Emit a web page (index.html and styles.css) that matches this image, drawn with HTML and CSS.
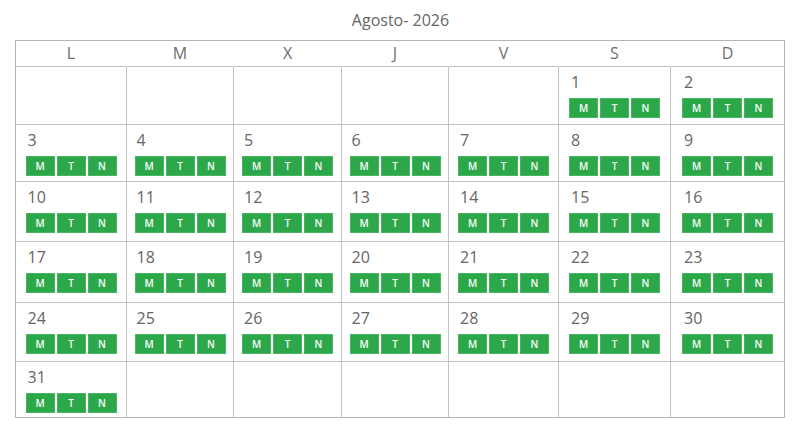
FILE: index.html
```html
<!DOCTYPE html>
<html lang="es">
<head>
<meta charset="utf-8">
<title>Agosto- 2026</title>
<link rel="stylesheet" href="styles.css">
</head>
<body>
<div class="page">
  <div class="title">Agosto- 2026</div>
  <div class="calendar">
    <div class="head">L</div>
    <div class="head">M</div>
    <div class="head">X</div>
    <div class="head">J</div>
    <div class="head">V</div>
    <div class="head">S</div>
    <div class="head">D</div>

    <div class="day"></div>
    <div class="day"></div>
    <div class="day"></div>
    <div class="day"></div>
    <div class="day"></div>
    <div class="day"><div class="num">1</div><div class="shifts"><span>M</span><span>T</span><span>N</span></div></div>
    <div class="day"><div class="num">2</div><div class="shifts"><span>M</span><span>T</span><span>N</span></div></div>

    <div class="day"><div class="num">3</div><div class="shifts"><span>M</span><span>T</span><span>N</span></div></div>
    <div class="day"><div class="num">4</div><div class="shifts"><span>M</span><span>T</span><span>N</span></div></div>
    <div class="day"><div class="num">5</div><div class="shifts"><span>M</span><span>T</span><span>N</span></div></div>
    <div class="day"><div class="num">6</div><div class="shifts"><span>M</span><span>T</span><span>N</span></div></div>
    <div class="day"><div class="num">7</div><div class="shifts"><span>M</span><span>T</span><span>N</span></div></div>
    <div class="day"><div class="num">8</div><div class="shifts"><span>M</span><span>T</span><span>N</span></div></div>
    <div class="day"><div class="num">9</div><div class="shifts"><span>M</span><span>T</span><span>N</span></div></div>

    <div class="day"><div class="num">10</div><div class="shifts"><span>M</span><span>T</span><span>N</span></div></div>
    <div class="day"><div class="num">11</div><div class="shifts"><span>M</span><span>T</span><span>N</span></div></div>
    <div class="day"><div class="num">12</div><div class="shifts"><span>M</span><span>T</span><span>N</span></div></div>
    <div class="day"><div class="num">13</div><div class="shifts"><span>M</span><span>T</span><span>N</span></div></div>
    <div class="day"><div class="num">14</div><div class="shifts"><span>M</span><span>T</span><span>N</span></div></div>
    <div class="day"><div class="num">15</div><div class="shifts"><span>M</span><span>T</span><span>N</span></div></div>
    <div class="day"><div class="num">16</div><div class="shifts"><span>M</span><span>T</span><span>N</span></div></div>

    <div class="day"><div class="num">17</div><div class="shifts"><span>M</span><span>T</span><span>N</span></div></div>
    <div class="day"><div class="num">18</div><div class="shifts"><span>M</span><span>T</span><span>N</span></div></div>
    <div class="day"><div class="num">19</div><div class="shifts"><span>M</span><span>T</span><span>N</span></div></div>
    <div class="day"><div class="num">20</div><div class="shifts"><span>M</span><span>T</span><span>N</span></div></div>
    <div class="day"><div class="num">21</div><div class="shifts"><span>M</span><span>T</span><span>N</span></div></div>
    <div class="day"><div class="num">22</div><div class="shifts"><span>M</span><span>T</span><span>N</span></div></div>
    <div class="day"><div class="num">23</div><div class="shifts"><span>M</span><span>T</span><span>N</span></div></div>

    <div class="day"><div class="num">24</div><div class="shifts"><span>M</span><span>T</span><span>N</span></div></div>
    <div class="day"><div class="num">25</div><div class="shifts"><span>M</span><span>T</span><span>N</span></div></div>
    <div class="day"><div class="num">26</div><div class="shifts"><span>M</span><span>T</span><span>N</span></div></div>
    <div class="day"><div class="num">27</div><div class="shifts"><span>M</span><span>T</span><span>N</span></div></div>
    <div class="day"><div class="num">28</div><div class="shifts"><span>M</span><span>T</span><span>N</span></div></div>
    <div class="day"><div class="num">29</div><div class="shifts"><span>M</span><span>T</span><span>N</span></div></div>
    <div class="day"><div class="num">30</div><div class="shifts"><span>M</span><span>T</span><span>N</span></div></div>

    <div class="day"><div class="num">31</div><div class="shifts"><span>M</span><span>T</span><span>N</span></div></div>
    <div class="day"></div>
    <div class="day"></div>
    <div class="day"></div>
    <div class="day"></div>
    <div class="day"></div>
    <div class="day"></div>
  </div>
</div>
</body>
</html>
```

FILE: styles.css
```css
* { box-sizing: border-box; }

html, body {
  margin: 0;
  padding: 0;
  background: #ffffff;
}

body {
  font-family: "Open Sans", "Noto Sans", sans-serif;
  color: #666666;
}

.page {
  padding: 10px 15px 0 15px;
  display: flex;
  flex-direction: column;
}

.title {
  font-size: 16px;
  line-height: 20px;
  text-align: center;
  color: #666666;
  margin-bottom: 10px;
  padding-left: 1px;
}

.calendar {
  width: 770px;
  display: grid;
  grid-template-columns: 111px 107px 108px 107px 110px 112px 114px;
  grid-template-rows: 26px 58px 57px 60px 61px 59px 56px;
  border-left: 1px solid #b5b5b5;
  border-top: 1px solid #b5b5b5;
}

.head {
  border-bottom: 1px solid #c2c2c2;
  border-right: 1px solid transparent;
  font-size: 16px;
  line-height: 24px;
  text-align: center;
  color: #6e6e6e;
}

.head:nth-child(7) {
  border-right-color: #b5b5b5;
}

.day {
  border-right: 1px solid #c2c2c2;
  border-bottom: 1px solid #c2c2c2;
  padding-top: 5px;
  display: flex;
  flex-direction: column;
  align-items: center;
}

.day:nth-child(7n) {
  border-right-color: #b5b5b5;
}

.day:nth-last-child(-n+7) {
  border-bottom-color: #b5b5b5;
}

.num {
  width: 91px;
  padding-left: 2px;
  font-size: 16px;
  line-height: 20px;
  color: #666666;
}

.shifts {
  width: 91px;
  margin-top: 6px;
  display: flex;
  gap: 2px;
}

.shifts span {
  flex: 1;
  height: 20px;
  background: #2ca84a;
  box-shadow: inset 0 0 0 1px #48b562;
  color: #ffffff;
  font-size: 10px;
  font-weight: 600;
  line-height: 20px;
  text-align: center;
}
```
